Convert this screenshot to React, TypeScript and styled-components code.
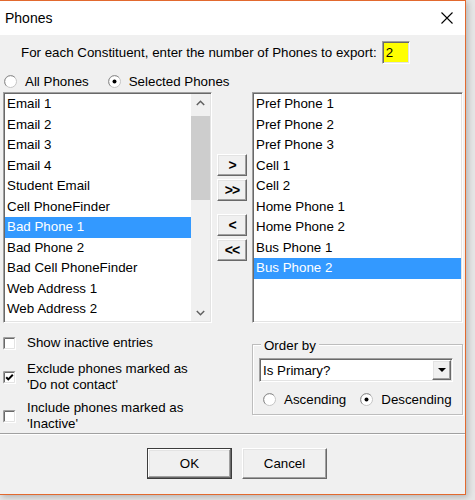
import React from "react";
import styled, { createGlobalStyle, css } from "styled-components";

const Global = createGlobalStyle`
  html, body { margin: 0; padding: 0; background: #e6e6e6; }
  body {
    width: 475px; height: 500px; overflow: hidden;
    font-family: "Liberation Sans", Arial, sans-serif;
    font-size: 13.33px; color: #000;
  }
  * { box-sizing: border-box; }
`;

const sunken = css`
  border: 1px solid;
  border-color: #a0a0a0 #ffffff #ffffff #a0a0a0;
  box-shadow: inset 1px 1px 0 #696969, inset -1px -1px 0 #e3e3e3;
  padding: 1px;
`;

const raised = css`
  border: 1px solid;
  border-color: #ffffff #696969 #696969 #ffffff;
  box-shadow: inset -1px -1px 0 #a0a0a0, inset 1px 1px 0 #e3e3e3;
  background: #f0f0f0;
`;

const Window = styled.div`
  width: 466px;
  height: 495px;
  display: flex;
  flex-direction: column;
  border-top: 1px solid #e2692e;
  border-right: 1px solid #e2692e;
  border-bottom: 1px solid #e2692e;
  box-shadow: 2px 2px 6px rgba(0, 0, 0, 0.22);
  background: #f0f0f0;
`;

const TitleBar = styled.div`
  height: 34px;
  background: #fff;
  display: flex;
  align-items: center;
  justify-content: space-between;
  padding-left: 5px;
  font-size: 14px;
`;

const CloseBox = styled.div`
  width: 36px;
  height: 34px;
  display: flex;
  align-items: center;
  justify-content: center;
`;

const Body = styled.div`
  flex: 1;
  display: flex;
  flex-direction: column;
  background: #f0f0f0;
`;

const PromptRow = styled.div`
  margin-top: 6px;
  height: 23px;
  padding-left: 21px;
  display: flex;
  align-items: center;
  gap: 5px;
`;

const CountBox = styled.div`
  ${sunken};
  width: 28px;
  height: 23px;
  background: #ffff00;
  padding-left: 3px;
  display: flex;
  align-items: center;
`;

const RadioRow = styled.div<{ $top: number; $left: number }>`
  margin-top: ${(p) => p.$top}px;
  height: 15px;
  padding-left: ${(p) => p.$left}px;
  display: flex;
  align-items: center;
`;

const Option = styled.label<{ $gapBefore?: number }>`
  display: flex;
  align-items: center;
  gap: 8px;
  margin-left: ${(p) => p.$gapBefore ?? 0}px;
  white-space: nowrap;
`;

const ListsRow = styled.div`
  margin-top: 3px;
  height: 231px;
  padding-left: 3px;
  display: flex;
`;

const ListBox = styled.div<{ $w: number }>`
  ${sunken};
  width: ${(p) => p.$w}px;
  height: 231px;
  background: #fff;
  display: flex;
  overflow: hidden;
`;

const Items = styled.div`
  flex: 1;
  overflow: hidden;
`;

const Item = styled.div<{ $sel?: boolean }>`
  height: 20.5px;
  line-height: 20.5px;
  padding-left: 2px;
  white-space: nowrap;
  background: ${(p) => (p.$sel ? "#3399ff" : "transparent")};
  color: ${(p) => (p.$sel ? "#fff" : "#000")};
`;

const ScrollBar = styled.div`
  width: 19px;
  background: #f0f0f0;
  display: flex;
  flex-direction: column;
`;

const ScrollArrow = styled.div`
  height: 17px;
  display: flex;
  align-items: center;
  justify-content: center;
`;

const Track = styled.div`
  flex: 1;
`;

const Thumb = styled.div`
  margin-top: 5px;
  height: 84px;
  background: #cdcdcd;
`;

const MoveCol = styled.div`
  width: 30px;
  margin: 0 5px;
  padding-top: 62px;
  display: flex;
  flex-direction: column;
`;

const MoveButton = styled.div<{ $top: number }>`
  ${raised};
  margin-top: ${(p) => p.$top}px;
  height: 22px;
  display: flex;
  align-items: center;
  justify-content: center;
  font-weight: bold;
  font-size: 14px;
  letter-spacing: -1px;
`;

const Lower = styled.div`
  height: 110px;
  display: flex;
`;

const CheckCol = styled.div`
  width: 252px;
  padding-left: 3px;
  display: flex;
  flex-direction: column;
`;

const CheckItem = styled.div<{ $top: number; $h: number }>`
  margin-top: ${(p) => p.$top}px;
  height: ${(p) => p.$h}px;
  display: flex;
  align-items: center;
  gap: 11px;
  line-height: 16px;
`;

const GroupBox = styled.div`
  position: relative;
  margin-top: 21px;
  width: 211px;
  height: 71px;
  border: 1px solid #bdbdbd;
  box-shadow: 1px 1px 0 #fff, inset 1px 1px 0 #fff;
`;

const GroupLabel = styled.div`
  position: absolute;
  top: -7px;
  left: 8px;
  padding: 0 3px;
  line-height: 16px;
  background: #f0f0f0;
`;

const Select = styled.div`
  ${sunken};
  margin: 13px 0 0 6px;
  width: 194px;
  height: 24px;
  background: #fff;
  display: flex;
  align-items: stretch;
`;

const SelectText = styled.div`
  flex: 1;
  padding-left: 2px;
  display: flex;
  align-items: center;
`;

const DropButton = styled.div`
  ${raised};
  width: 19px;
  display: flex;
  align-items: center;
  justify-content: center;
`;

const Separator = styled.div`
  border-top: 1px solid #a0a0a0;
  border-bottom: 1px solid #ffffff;
`;

const Footer = styled.div`
  padding: 13px 0 0 147px;
  display: flex;
  gap: 10px;
`;

const DialogButton = styled.div<{ $default?: boolean }>`
  ${raised};
  width: 85px;
  height: 31px;
  display: flex;
  align-items: center;
  justify-content: center;
  ${(p) =>
    p.$default &&
    css`
      border: 1px solid #3c3c3c;
      box-shadow: inset -1px -1px 0 #696969, inset 1px 1px 0 #fff,
        inset -2px -2px 0 #a0a0a0, inset 2px 2px 0 #e3e3e3;
    `}
`;

const Radio = ({ checked }: { checked?: boolean }) => (
  <svg width="13" height="13" viewBox="0 0 13 13">
    <circle cx="6.5" cy="6.5" r="6" fill="#fff" stroke="#c4c4c4" />
    <path d="M2.26 10.74 A6 6 0 0 1 10.74 2.26" fill="none" stroke="#8c8c8c" />
    {checked && <circle cx="6.5" cy="6.5" r="2" fill="#000" />}
  </svg>
);

const CheckBox = ({ checked }: { checked?: boolean }) => (
  <svg width="13" height="13" viewBox="0 0 13 13">
    <rect x="0" y="0" width="13" height="13" fill="#fff" />
    <path d="M0.5 12.5 V0.5 H12.5" fill="none" stroke="#a0a0a0" />
    <path d="M1.5 11.5 V1.5 H11.5" fill="none" stroke="#696969" />
    <path d="M1.5 11.5 H11.5 V1.5" fill="none" stroke="#e3e3e3" />
    <path d="M0.5 12.5 H12.5 V0.5" fill="none" stroke="#ffffff" />
    {checked && (
      <path d="M3.2 6.2 L5.3 8.4 L9.8 3.8" fill="none" stroke="#000" strokeWidth="2" />
    )}
  </svg>
);

const Chevron = ({ up }: { up?: boolean }) => (
  <svg width="9" height="6" viewBox="0 0 9 6">
    <path
      d={up ? "M0.8 5 L4.5 1.3 L8.2 5" : "M0.8 1 L4.5 4.7 L8.2 1"}
      fill="none"
      stroke="#606060"
      strokeWidth="1.5"
    />
  </svg>
);

const leftItems = [
  "Email 1",
  "Email 2",
  "Email 3",
  "Email 4",
  "Student Email",
  "Cell PhoneFinder",
  "Bad Phone 1",
  "Bad Phone 2",
  "Bad Cell PhoneFinder",
  "Web Address 1",
  "Web Address 2",
];

const rightItems = [
  "Pref Phone 1",
  "Pref Phone 2",
  "Pref Phone 3",
  "Cell 1",
  "Cell 2",
  "Home Phone 1",
  "Home Phone 2",
  "Bus Phone 1",
  "Bus Phone 2",
];

export default function App() {
  return (
    <>
      <Global />
      <Window>
        <TitleBar>
          <span>Phones</span>
          <CloseBox>
            <svg width="12" height="12" viewBox="0 0 12 12">
              <path d="M0.5 0.5 L11.5 11.5 M11.5 0.5 L0.5 11.5" stroke="#000" strokeWidth="1.1" />
            </svg>
          </CloseBox>
        </TitleBar>
        <Body>
          <PromptRow>
            <span>For each Constituent, enter the number of Phones to export:</span>
            <CountBox>2</CountBox>
          </PromptRow>
          <RadioRow $top={10} $left={4}>
            <Option>
              <Radio />
              All Phones
            </Option>
            <Option $gapBefore={19}>
              <Radio checked />
              Selected Phones
            </Option>
          </RadioRow>
          <ListsRow>
            <ListBox $w={209}>
              <Items>
                {leftItems.map((t) => (
                  <Item key={t} $sel={t === "Bad Phone 1"}>
                    {t}
                  </Item>
                ))}
              </Items>
              <ScrollBar>
                <ScrollArrow>
                  <Chevron up />
                </ScrollArrow>
                <Track>
                  <Thumb />
                </Track>
                <ScrollArrow>
                  <Chevron />
                </ScrollArrow>
              </ScrollBar>
            </ListBox>
            <MoveCol>
              <MoveButton $top={0}>&gt;</MoveButton>
              <MoveButton $top={3}>&gt;&gt;</MoveButton>
              <MoveButton $top={13}>&lt;</MoveButton>
              <MoveButton $top={3}>&lt;&lt;</MoveButton>
            </MoveCol>
            <ListBox $w={211}>
              <Items>
                {rightItems.map((t) => (
                  <Item key={t} $sel={t === "Bus Phone 2"}>
                    {t}
                  </Item>
                ))}
              </Items>
            </ListBox>
          </ListsRow>
          <Lower>
            <CheckCol>
              <CheckItem $top={12} $h={16}>
                <CheckBox />
                <span>Show inactive entries</span>
              </CheckItem>
              <CheckItem $top={10} $h={32}>
                <CheckBox checked />
                <span>
                  Exclude phones marked as
                  <br />
                  'Do not contact'
                </span>
              </CheckItem>
              <CheckItem $top={7} $h={32}>
                <CheckBox />
                <span>
                  Include phones marked as
                  <br />
                  'Inactive'
                </span>
              </CheckItem>
            </CheckCol>
            <GroupBox>
              <GroupLabel>Order by</GroupLabel>
              <Select>
                <SelectText>Is Primary?</SelectText>
                <DropButton>
                  <svg width="8" height="4" viewBox="0 0 8 4">
                    <polygon points="0,0 8,0 4,4" fill="#000" />
                  </svg>
                </DropButton>
              </Select>
              <RadioRow $top={10} $left={10}>
                <Option>
                  <Radio />
                  Ascending
                </Option>
                <Option $gapBefore={14}>
                  <Radio checked />
                  Descending
                </Option>
              </RadioRow>
            </GroupBox>
          </Lower>
          <Separator />
          <Footer>
            <DialogButton $default>OK</DialogButton>
            <DialogButton>Cancel</DialogButton>
          </Footer>
        </Body>
      </Window>
    </>
  );
}
